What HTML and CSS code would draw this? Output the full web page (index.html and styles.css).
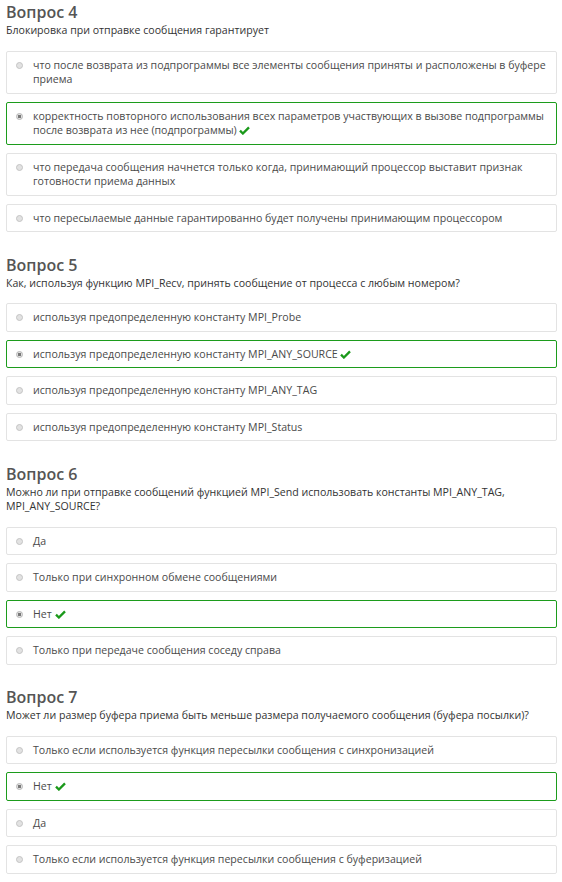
FILE: index.html
```html
<!DOCTYPE html>
<html lang="ru">
<head>
<meta charset="utf-8">
<title>Тест</title>
<link rel="stylesheet" href="styles.css">
</head>
<body>
<div class="page">
  <section class="q">
    <h2 class="q-title">Вопрос 4</h2>
    <p class="q-text">Блокировка при отправке сообщения гарантирует</p>
    <ul class="opts">
      <li class="opt"><span class="radio"></span><span class="lbl">что после возврата из подпрограммы все элементы сообщения приняты и расположены в буфере приема</span></li>
      <li class="opt correct"><span class="radio on"></span><span class="lbl">корректность повторного использования всех параметров участвующих в вызове подпрограммы после возврата из нее (подпрограммы) <svg class="check" viewBox="0 0 12 10"><path d="M1 5.2 L4.2 8.3 L11 1.6"/></svg></span></li>
      <li class="opt"><span class="radio"></span><span class="lbl">что передача сообщения начнется только когда, принимающий процессор выставит признак готовности приема данных</span></li>
      <li class="opt"><span class="radio"></span><span class="lbl">что пересылаемые данные гарантированно будет получены принимающим процессором</span></li>
    </ul>
  </section>
  <section class="q">
    <h2 class="q-title">Вопрос 5</h2>
    <p class="q-text">Как, используя функцию MPI_Recv, принять сообщение от процесса с любым номером?</p>
    <ul class="opts">
      <li class="opt"><span class="radio"></span><span class="lbl">используя предопределенную константу MPI_Probe</span></li>
      <li class="opt correct"><span class="radio on"></span><span class="lbl">используя предопределенную константу MPI_ANY_SOURCE <svg class="check" viewBox="0 0 12 10"><path d="M1 5.2 L4.2 8.3 L11 1.6"/></svg></span></li>
      <li class="opt"><span class="radio"></span><span class="lbl">используя предопределенную константу MPI_ANY_TAG</span></li>
      <li class="opt"><span class="radio"></span><span class="lbl">используя предопределенную константу MPI_Status</span></li>
    </ul>
  </section>
  <section class="q">
    <h2 class="q-title">Вопрос 6</h2>
    <p class="q-text">Можно ли при отправке сообщений функцией MPI_Send использовать константы MPI_ANY_TAG, MPI_ANY_SOURCE?</p>
    <ul class="opts">
      <li class="opt"><span class="radio"></span><span class="lbl">Да</span></li>
      <li class="opt"><span class="radio"></span><span class="lbl">Только при синхронном обмене сообщениями</span></li>
      <li class="opt correct"><span class="radio on"></span><span class="lbl">Нет <svg class="check" viewBox="0 0 12 10"><path d="M1 5.2 L4.2 8.3 L11 1.6"/></svg></span></li>
      <li class="opt"><span class="radio"></span><span class="lbl">Только при передаче сообщения соседу справа</span></li>
    </ul>
  </section>
  <section class="q">
    <h2 class="q-title">Вопрос 7</h2>
    <p class="q-text">Может ли размер буфера приема быть меньше размера получаемого сообщения (буфера посылки)?</p>
    <ul class="opts">
      <li class="opt"><span class="radio"></span><span class="lbl">Только если используется функция пересылки сообщения с синхронизацией</span></li>
      <li class="opt correct"><span class="radio on"></span><span class="lbl">Нет <svg class="check" viewBox="0 0 12 10"><path d="M1 5.2 L4.2 8.3 L11 1.6"/></svg></span></li>
      <li class="opt"><span class="radio"></span><span class="lbl">Да</span></li>
      <li class="opt"><span class="radio"></span><span class="lbl">Только если используется функция пересылки сообщения с буферизацией</span></li>
    </ul>
  </section>
</div>
</body>
</html>
```

FILE: styles.css
```css
html, body {
  margin: 0;
  padding: 0;
  background: #fff;
}
.page {
  padding: 2px 5px 0 6px;
  font-family: "Open Sans", "DejaVu Sans", sans-serif;
  color: #4a4a4a;
  display: flex;
  flex-direction: column;
  gap: 22.5px;
}
.q-title {
  margin: 0;
  font-size: 16px;
  font-weight: 600;
  line-height: 21px;
  color: #555;
}
.q-text {
  margin: 0 0 13px;
  font-size: 10.6px;
  line-height: 14.5px;
  color: #333;
}
.opts {
  list-style: none;
  margin: 0;
  padding: 0;
  display: flex;
  flex-direction: column;
  gap: 8px;
}
.opt {
  display: flex;
  align-items: flex-start;
  border: 1px solid #e3e3e3;
  border-radius: 2px;
  padding: 6px 8px 6px 9px;
  font-size: 10.6px;
  line-height: 14.5px;
  color: #4a4a4a;
}
.opt.correct {
  border-color: #1c9c1c;
}
.radio {
  flex: none;
  width: 5px;
  height: 5px;
  margin: 4px 10px 0 0;
  border: 1px solid #c4c4c4;
  border-radius: 50%;
  background: #e2e2e2;
}
.radio.on {
  background: radial-gradient(circle, #777 0 1.4px, #e2e2e2 1.9px);
  border-color: #b5b5b5;
}
.lbl {
  flex: 1;
}
.check {
  width: 11px;
  height: 9px;
  vertical-align: -1px;
  fill: none;
  stroke: #1a991a;
  stroke-width: 2.6;
  stroke-linecap: butt;
  stroke-linejoin: miter;
}
```
